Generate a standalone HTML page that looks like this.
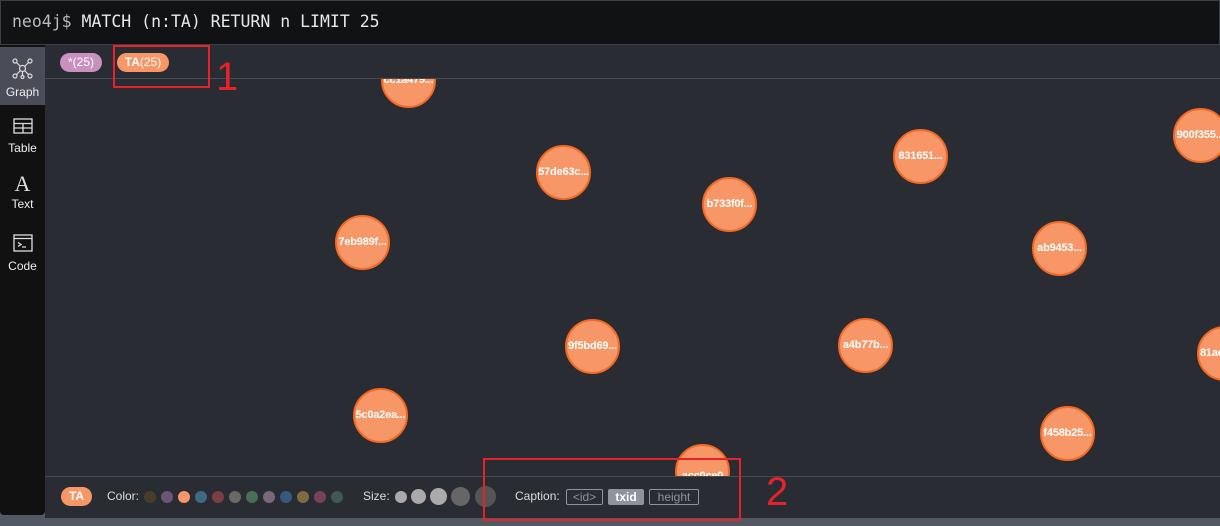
<!DOCTYPE html>
<html><head><meta charset="utf-8"><style>
*{margin:0;padding:0;box-sizing:border-box}
body{width:1220px;height:526px;background:#535865;position:relative;overflow:hidden;font-family:"Liberation Sans",sans-serif}
.top{position:absolute;left:0;top:0;width:1220px;height:45px;background:#111213;border:1px solid #3a3f48}
.top span{position:absolute;left:11px;top:11px;font-family:"DejaVu Sans Mono",monospace;font-size:16.5px;color:#e8e8e8}
.side{position:absolute;left:0;top:45px;width:45px;height:470px;background:#111;border-bottom-left-radius:4px;border-bottom-right-radius:4px}
.it{position:absolute;left:0;width:45px;height:58px;color:#eee;font-size:12px;text-align:center}
.it .l{position:absolute;left:0;width:45px;}
.main{position:absolute;left:45px;top:45px;width:1175px;height:473px;background:#292c33;overflow:hidden}
.graph{position:absolute;left:0;top:34px;width:1175px;height:397px;overflow:hidden}
.hl{position:absolute;left:0;top:33px;width:1175px;height:1px;background:#474b54}
.fl{position:absolute;left:0;top:431px;width:1175px;height:1px;background:#474b54}
.foot{position:absolute;left:0;top:432px;width:1175px;height:41px;background:#292c33}
.pill{position:absolute;height:19px;border-radius:10px;font-size:12px;color:#fff;line-height:19px;text-align:center}
.n{position:absolute;width:55px;height:55px;border-radius:50%;background:#f79767;border:2px solid #f36924;color:#fff;font-size:11px;font-weight:bold;text-align:center;line-height:51px;white-space:nowrap;overflow:hidden;margin:-27px 0 0 -27px;letter-spacing:-0.2px}
.d{position:absolute;border-radius:50%}
.cap{position:absolute;top:12px;height:16px;font-size:12px;line-height:14px;border:1px solid #8f939d;color:#8f939d;border-radius:2px;text-align:center}
.red{position:absolute;border:2px solid #e8212a}
.rn{position:absolute;color:#e8212a;font-size:40px;line-height:40px}
</style></head><body>
<div class="top"><span><span style="position:static;color:#bbb">neo4j$</span> MATCH (n:TA) RETURN n LIMIT 25</span></div>
<div class="side">
 <div class="it" style="top:2px;background:#4a4c57">
  <svg style="position:absolute;left:12px;top:11px" width="21" height="21" viewBox="0 0 21 21" fill="none" stroke="#ddd" stroke-width="1.2"><circle cx="10.5" cy="10.5" r="3"/><circle cx="3" cy="3" r="2"/><circle cx="18" cy="3" r="2"/><circle cx="3" cy="18" r="2"/><circle cx="18" cy="18" r="2"/><circle cx="10.5" cy="19" r="1.5"/><path d="M4.5 4.5L8.5 8.5M16.5 4.5L12.5 8.5M4.5 16.5L8.5 12.5M16.5 16.5L12.5 12.5M10.5 13.5V17.5"/></svg>
  <div class="l" style="top:38px">Graph</div></div>
 <div class="it" style="top:60px">
  <svg style="position:absolute;left:13px;top:13px" width="20" height="16" viewBox="0 0 20 16" fill="none" stroke="#ddd" stroke-width="1.3"><rect x="1" y="1" width="18" height="14"/><path d="M1 5.5H19M1 10H19M10 5.5V15"/></svg>
  <div class="l" style="top:36px">Table</div></div>
 <div class="it" style="top:118px">
  <div class="l" style="top:8px;font-family:'Liberation Serif',serif;font-size:22px;color:#ddd">A</div>
  <div class="l" style="top:34px">Text</div></div>
 <div class="it" style="top:176px">
  <svg style="position:absolute;left:13px;top:13px" width="20" height="18" viewBox="0 0 20 18" fill="none" stroke="#ddd" stroke-width="1.3"><rect x="1" y="1" width="18" height="16"/><path d="M1 4.5H19M5 8.5L8 10.5L5 12.5M9 13H13"/></svg>
  <div class="l" style="top:38px">Code</div></div>
</div>
<div class="main">
 <div class="pill" style="left:15px;top:8px;width:42px;background:#c990c0">*(25)</div>
 <div class="pill" style="left:72px;top:8px;width:52px;background:#f79767"><b>TA</b>(25)</div>
 <div class="graph">
 <div class="n" style="left:363px;top:1px">cc1a479...</div>
 <div class="n" style="left:518px;top:93px">57de63c...</div>
 <div class="n" style="left:875px;top:77px">831651...</div>
 <div class="n" style="left:1155px;top:56px">900f355...</div>
 <div class="n" style="left:684px;top:125px">b733f0f...</div>
 <div class="n" style="left:317px;top:163px">7eb989f...</div>
 <div class="n" style="left:1014px;top:169px">ab9453...</div>
 <div class="n" style="left:547px;top:267px">9f5bd69...</div>
 <div class="n" style="left:820px;top:266px">a4b77b...</div>
 <div class="n" style="left:1179px;top:274px;text-align:left;padding-left:1px">81ac</div>
 <div class="n" style="left:335px;top:336px">5c0a2ea...</div>
 <div class="n" style="left:1022px;top:354px">f458b25...</div>
 <div class="n" style="left:657px;top:392px;line-height:60px">acc0ce0</div>
 </div>
 <div class="hl"></div>
 <div class="fl"></div>
 <div class="foot">
  <div class="pill" style="left:16px;top:10px;width:31px;background:#f79767;font-weight:bold">TA</div>
  <div style="position:absolute;left:62px;top:12px;font-size:12px;color:#ddd">Color:</div>
  <div class="d" style="left:99px;top:14px;width:12px;height:12px;background:#463e2a"></div>
  <div class="d" style="left:116px;top:14px;width:12px;height:12px;background:#6a5672"></div>
  <div class="d" style="left:133px;top:14px;width:12px;height:12px;background:#f79767"></div>
  <div class="d" style="left:150px;top:14px;width:12px;height:12px;background:#3d6b7f"></div>
  <div class="d" style="left:167px;top:14px;width:12px;height:12px;background:#7a3f45"></div>
  <div class="d" style="left:184px;top:14px;width:12px;height:12px;background:#6b6964"></div>
  <div class="d" style="left:201px;top:14px;width:12px;height:12px;background:#4b6e56"></div>
  <div class="d" style="left:218px;top:14px;width:12px;height:12px;background:#79677a"></div>
  <div class="d" style="left:235px;top:14px;width:12px;height:12px;background:#38597f"></div>
  <div class="d" style="left:252px;top:14px;width:12px;height:12px;background:#7f6b40"></div>
  <div class="d" style="left:269px;top:14px;width:12px;height:12px;background:#764159"></div>
  <div class="d" style="left:286px;top:14px;width:12px;height:12px;background:#3f5a52"></div>
  <div style="position:absolute;left:318px;top:12px;font-size:12px;color:#ddd">Size:</div>
  <div class="d" style="left:350px;top:14px;width:12px;height:12px;background:#aaa"></div>
  <div class="d" style="left:366px;top:12px;width:15px;height:15px;background:#aaa"></div>
  <div class="d" style="left:385px;top:11px;width:17px;height:17px;background:#aaa"></div>
  <div class="d" style="left:406px;top:10px;width:19px;height:19px;background:#666"></div>
  <div class="d" style="left:430px;top:9px;width:21px;height:21px;background:#555"></div>
  <div style="position:absolute;left:470px;top:12px;font-size:12px;color:#ddd">Caption:</div>
  <div class="cap" style="left:521px;width:37px">&lt;id&gt;</div>
  <div class="cap" style="left:563px;width:36px;background:#8f939d;color:#fff;font-weight:bold">txid</div>
  <div class="cap" style="left:604px;width:50px">height</div>
 </div>
</div>
<div class="red" style="left:113px;top:45px;width:97px;height:43px"></div>
<div class="rn" style="left:216px;top:57px">1</div>
<div class="red" style="left:483px;top:458px;width:258px;height:63px"></div>
<div class="rn" style="left:766px;top:472px">2</div>
</body></html>
